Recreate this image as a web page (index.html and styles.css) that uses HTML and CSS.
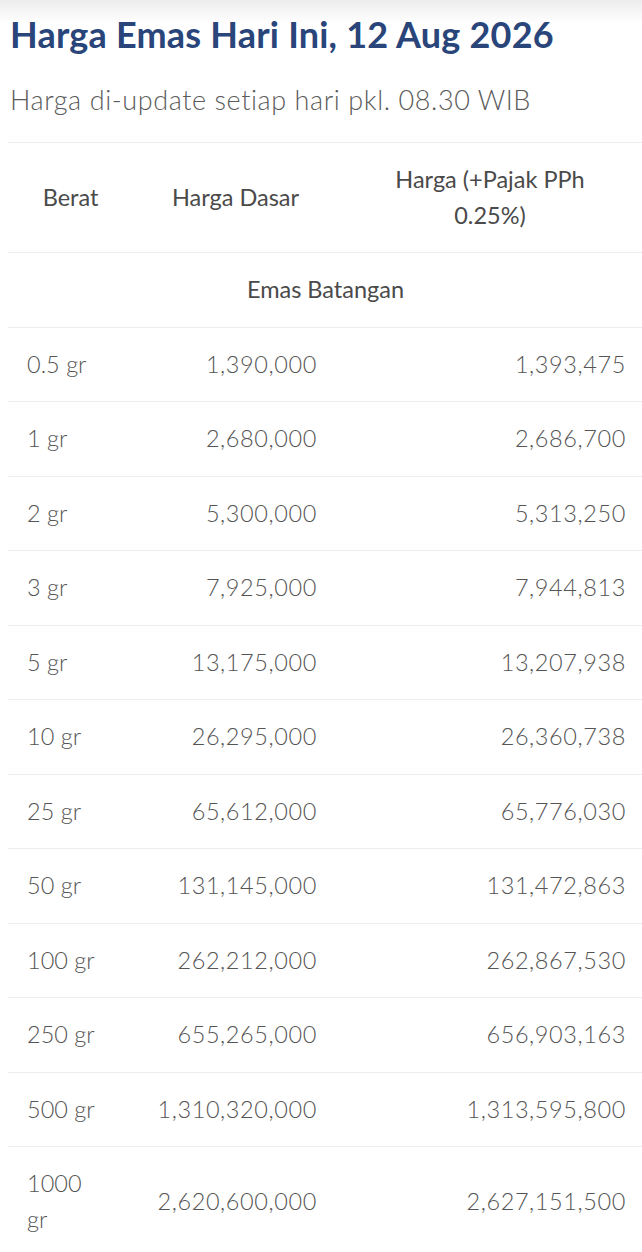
FILE: index.html
```html
<!DOCTYPE html>
<html lang="id">
<head>
<meta charset="utf-8">
<title>Harga Emas Hari Ini</title>
<link rel="stylesheet" href="styles.css">
</head>
<body>
<div class="page">
  <h1 class="title">Harga Emas Hari Ini, 12 Aug 2026</h1>
  <p class="subtitle">Harga di-update setiap hari pkl. 08.30 WIB</p>
  <table class="price-table">
    <colgroup>
      <col class="c-weight">
      <col class="c-base">
      <col class="c-tax">
    </colgroup>
    <thead>
      <tr>
        <th>Berat</th>
        <th>Harga Dasar</th>
        <th class="th-tax">Harga (+Pajak PPh 0.25%)</th>
      </tr>
    </thead>
    <tbody>
      <tr class="group"><td colspan="3">Emas Batangan</td></tr>
      <tr><td class="w">0.5 gr</td><td class="num base">1,390,000</td><td class="num tax">1,393,475</td></tr>
      <tr><td class="w">1 gr</td><td class="num base">2,680,000</td><td class="num tax">2,686,700</td></tr>
      <tr><td class="w">2 gr</td><td class="num base">5,300,000</td><td class="num tax">5,313,250</td></tr>
      <tr><td class="w">3 gr</td><td class="num base">7,925,000</td><td class="num tax">7,944,813</td></tr>
      <tr><td class="w">5 gr</td><td class="num base">13,175,000</td><td class="num tax">13,207,938</td></tr>
      <tr><td class="w">10 gr</td><td class="num base">26,295,000</td><td class="num tax">26,360,738</td></tr>
      <tr><td class="w">25 gr</td><td class="num base">65,612,000</td><td class="num tax">65,776,030</td></tr>
      <tr><td class="w">50 gr</td><td class="num base">131,145,000</td><td class="num tax">131,472,863</td></tr>
      <tr><td class="w">100 gr</td><td class="num base">262,212,000</td><td class="num tax">262,867,530</td></tr>
      <tr><td class="w">250 gr</td><td class="num base">655,265,000</td><td class="num tax">656,903,163</td></tr>
      <tr><td class="w">500 gr</td><td class="num base">1,310,320,000</td><td class="num tax">1,313,595,800</td></tr>
      <tr><td class="w">1000 gr</td><td class="num base">2,620,600,000</td><td class="num tax">2,627,151,500</td></tr>
    </tbody>
  </table>
</div>
</body>
</html>
```
FILE: styles.css
```css
html, body {
  margin: 0;
  padding: 0;
  background: #fff;
}
body {
  font-family: Lato, "Liberation Sans", sans-serif;
  color: #555;
  background: linear-gradient(#ececec 0, #f6f6f6 12px, #fff 24px) no-repeat;
  background-size: 100% 24px;
  overflow: hidden;
}
.page {
  padding: 12px 0 0 8px;
}
.title {
  margin: 0 0 0 2px;
  font-size: 36px;
  line-height: 44px;
  font-weight: 700;
  letter-spacing: 0.2px;
  color: #29457a;
}
.subtitle {
  margin: 28px 0 0 2px;
  font-size: 27px;
  line-height: 32px;
  font-weight: 300;
  letter-spacing: 0.58px;
  color: #5b5b5b;
}
.price-table {
  margin-top: 26px;
  width: 634px;
  border-collapse: collapse;
  table-layout: fixed;
  font-size: 23.5px;
}
.c-weight { width: 124px; }
.c-base { width: 206px; }
.c-tax { width: 304px; }
.price-table th,
.price-table td {
  padding: 19px 18px 19px 19px;
  line-height: 35.5px;
  border-top: 1px solid #ececec;
  vertical-align: middle;
}
.price-table th {
  font-weight: 400;
  text-align: center;
  color: #4a4a4a;
}
.price-table th.th-tax {
  padding-left: 40px;
  padding-right: 40px;
}
.price-table td {
  text-align: left;
  font-weight: 300;
  color: #555;
}
.price-table td.w {
  padding-right: 34px;
}
.price-table td.num {
  text-align: right;
  letter-spacing: 0.6px;
}
.price-table td.base {
  padding-right: 21px;
}
.price-table td.tax {
  padding-right: 16px;
}
.price-table tr.group td {
  text-align: center;
  font-weight: 400;
  color: #4a4a4a;
}
```
